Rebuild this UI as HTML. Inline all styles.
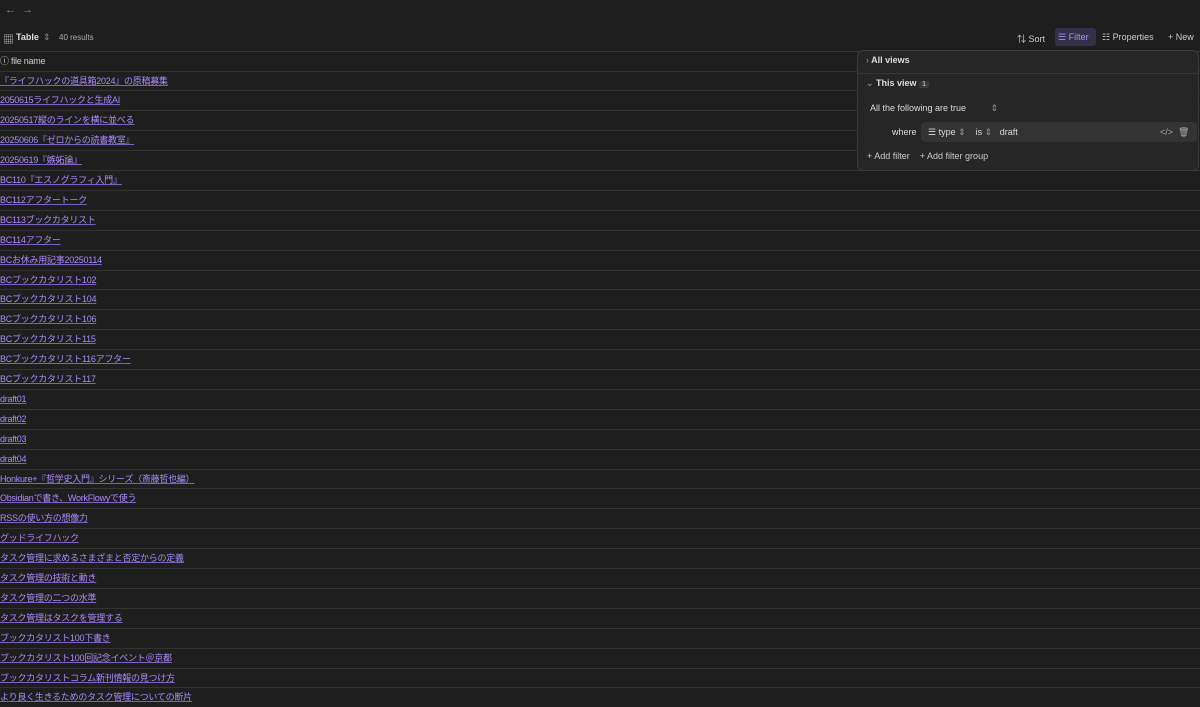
<!DOCTYPE html>
<html><head><meta charset="utf-8"><style>
*{box-sizing:border-box;margin:0;padding:0}
body{width:1200px;height:707px;overflow:hidden;background:#1e1e1e;font-family:"Liberation Sans","Noto Sans CJK JP",sans-serif;color:#dadada;position:relative}
.nav{position:absolute;top:4px;left:5px;color:#8a8a8a;font-size:11px}
.tb{position:absolute;top:31px;left:0;right:0;height:20px;font-size:9px}
.row{position:absolute;left:0;right:0;height:20px;border-top:1px solid #333;font-size:9px;line-height:19px;letter-spacing:-0.25px}
.row a{color:#a88bfa;text-decoration:underline;text-decoration-color:#7a64c0}
.panel{position:absolute;left:857px;top:50px;width:342px;height:121px;background:#262626;border:1px solid #3a3a3a;border-radius:6px;font-size:9px;color:#dcdcdc}
.panel .sep{position:absolute;left:0;right:0;top:22px;border-top:1px solid #383838}
</style></head><body>
<div class="nav">← &nbsp;→</div>
<div class="tb">
<span style="position:absolute;left:3px;top:0px;font-size:11px;color:#bbb">▦</span>
<span style="position:absolute;left:16px;top:1px;font-weight:bold;color:#ddd">Table</span>
<span style="position:absolute;left:43px;top:1px;color:#888">⇕</span>
<span style="position:absolute;left:59px;top:2px;color:#aaa;font-size:8px">40 results</span>
<span style="position:absolute;left:1017px;top:1px;color:#ccc">⇅ Sort</span>
<span style="position:absolute;left:1055px;top:-3px;width:41px;height:18px;background:#35304a;border-radius:3px"></span>
<span style="position:absolute;left:1058px;top:1px;color:#a88bfa">☰ Filter</span>
<span style="position:absolute;left:1102px;top:1px;color:#ccc">☷ Properties</span>
<span style="position:absolute;left:1168px;top:1px;color:#ccc">+ New</span>
</div>
<div class="row" style="top:51px;color:#ccc">ⓘ file name</div>
<div id="rows"></div>
<div class="panel">
<div style="position:absolute;left:8px;top:4px;font-weight:bold"><span style="color:#777">›</span> All views</div>
<div class="sep"></div>
<div style="position:absolute;left:8px;top:27px;font-weight:bold"><span style="color:#777">⌄</span> This view <span style="background:#3a3a3a;color:#aaa;padding:0 3px;border-radius:2px;font-size:7px">1</span></div>
<div style="position:absolute;left:12px;top:52px">All the following are true <span style="color:#999;margin-left:22px">⇕</span></div>
<div style="position:absolute;left:34px;top:76px">where</div>
<div style="position:absolute;left:63px;top:71px;width:276px;height:20px;background:#333;border-radius:4px"></div>
<div style="position:absolute;left:70px;top:76px">☰ type <span style="color:#999">⇕</span> &nbsp;&nbsp; is <span style="color:#999">⇕</span> &nbsp;&nbsp;draft</div>
<div style="position:absolute;left:302px;top:76px;color:#aaa">&lt;/&gt; &nbsp;🗑</div>
<div style="position:absolute;left:9px;top:100px;color:#ccc">+ Add filter &nbsp;&nbsp; + Add filter group</div>
</div>
<script>
var t=["『ライフハックの道具箱2024』の原稿募集","2050615ライフハックと生成AI","20250517縦のラインを横に並べる","20250606『ゼロからの読書教室』","20250619『嫉妬論』","BC110『エスノグラフィ入門』","BC112アフタートーク","BC113ブックカタリスト","BC114アフター","BCお休み用記事20250114","BCブックカタリスト102","BCブックカタリスト104","BCブックカタリスト106","BCブックカタリスト115","BCブックカタリスト116アフター","BCブックカタリスト117","draft01","draft02","draft03","draft04","Honkure+『哲学史入門』シリーズ（斎藤哲也編）","Obsidianで書き、WorkFlowyで使う","RSSの使い方の想像力","グッドライフハック","タスク管理に求めるさまざまと否定からの定義","タスク管理の技術と動き","タスク管理の二つの水準","タスク管理はタスクを管理する","ブックカタリスト100下書き","ブックカタリスト100回記念イベント＠京都","ブックカタリストコラム新刊情報の見つけ方","より良く生きるためのタスク管理についての断片"];
var h="";for(var i=0;i<t.length;i++)h+='<div class="row" style="top:'+(70.5+i*19.9)+'px"><a>'+t[i]+'</a></div>';
document.getElementById("rows").innerHTML=h;
</script>
</body></html>
